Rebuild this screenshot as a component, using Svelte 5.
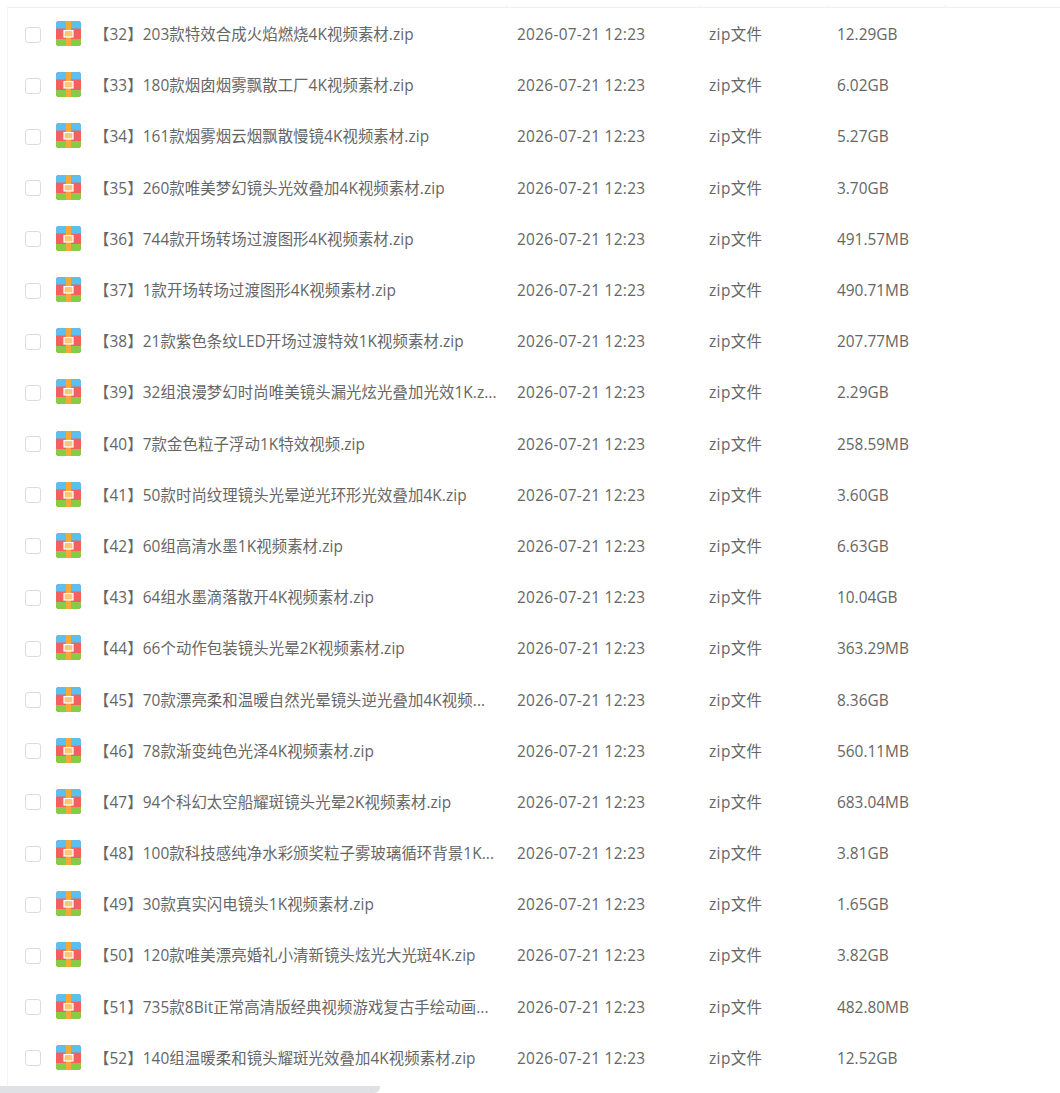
<script>
  const files = [
    ["【32】203款特效合成火焰燃烧4K视频素材.zip", "12.29GB"],
    ["【33】180款烟囱烟雾飘散工厂4K视频素材.zip", "6.02GB"],
    ["【34】161款烟雾烟云烟飘散慢镜4K视频素材.zip", "5.27GB"],
    ["【35】260款唯美梦幻镜头光效叠加4K视频素材.zip", "3.70GB"],
    ["【36】744款开场转场过渡图形4K视频素材.zip", "491.57MB"],
    ["【37】1款开场转场过渡图形4K视频素材.zip", "490.71MB"],
    ["【38】21款紫色条纹LED开场过渡特效1K视频素材.zip", "207.77MB"],
    ["【39】32组浪漫梦幻时尚唯美镜头漏光炫光叠加光效1K.z...", "2.29GB"],
    ["【40】7款金色粒子浮动1K特效视频.zip", "258.59MB"],
    ["【41】50款时尚纹理镜头光晕逆光环形光效叠加4K.zip", "3.60GB"],
    ["【42】60组高清水墨1K视频素材.zip", "6.63GB"],
    ["【43】64组水墨滴落散开4K视频素材.zip", "10.04GB"],
    ["【44】66个动作包装镜头光晕2K视频素材.zip", "363.29MB"],
    ["【45】70款漂亮柔和温暖自然光晕镜头逆光叠加4K视频...", "8.36GB"],
    ["【46】78款渐变纯色光泽4K视频素材.zip", "560.11MB"],
    ["【47】94个科幻太空船耀斑镜头光晕2K视频素材.zip", "683.04MB"],
    ["【48】100款科技感纯净水彩颁奖粒子雾玻璃循环背景1K...", "3.81GB"],
    ["【49】30款真实闪电镜头1K视频素材.zip", "1.65GB"],
    ["【50】120款唯美漂亮婚礼小清新镜头炫光大光斑4K.zip", "3.82GB"],
    ["【51】735款8Bit正常高清版经典视频游戏复古手绘动画...", "482.80MB"],
    ["【52】140组温暖柔和镜头耀斑光效叠加4K视频素材.zip", "12.52GB"],
  ];
</script>

<div class="page">
  <div class="table">
    <div class="head">
      <span class="c-name"></span>
      <span class="c-date"></span>
      <span class="c-type"></span>
      <span class="c-size"></span>
    </div>
    {#each files as file}
      <div class="row">
        <span class="check"></span>
        <svg class="icon" viewBox="0 0 25 25" width="25" height="25">
          <rect width="25" height="25" rx="3" fill="#f45f5f" />
          <path d="M0 7.500V3a3 3 0 0 1 3-3h19a3 3 0 0 1 3 3v4.500z" fill="#5ac0f2" />
          <path d="M0 18v4a3 3 0 0 0 3 3h19a3 3 0 0 0 3-3v-4z" fill="#86cc44" />
          <rect x="10" width="5" height="25" fill="#f7a936" />
          <rect x="8" y="9.500" width="9" height="6.500" fill="#fbc57c" stroke="#fff" stroke-width="1.2" />
        </svg>
        <span class="name">{file[0]}</span>
        <span class="date">2026-07-21 12:23</span>
        <span class="type">zip文件</span>
        <span class="size">{file[1]}</span>
      </div>
    {/each}
  </div>
  <div class="scrollbar"></div>
</div>

<style>
  :global(body) {
    margin: 0;
    background: #fff;
    overflow: hidden;
  }

  .page {
    height: 1093px;
    display: flex;
    flex-direction: column;
    overflow: hidden;
    font-family: "Open Sans", "Noto Sans CJK SC", sans-serif;
    font-size: 15.4px;
    color: #666;
  }

  .table {
    flex: 1;
    margin: 7px 0 0 7px;
    border-top: 1px solid #f0f0f0;
    border-left: 1px solid #f4f4f4;
  }

  .head {
    display: flex;
    height: 0;
    padding-left: 498px;
  }

  .head span {
    height: 3px;
    margin-top: -3px;
    border-left: 1px solid #f0f0f0;
  }

  .c-name { width: 193px; }
  .c-date { width: 127px; }
  .c-type { width: 116px; }

  .row {
    display: flex;
    align-items: center;
    height: 51.2px;
    padding-left: 17px;
    white-space: nowrap;
  }

  .check {
    flex: none;
    width: 14px;
    height: 14px;
    margin: 2px 15px 0 0;
    border: 1px solid #dcdcdc;
    border-radius: 3px;
  }

  .icon {
    flex: none;
    margin-right: 13px;
  }

  .name {
    flex: none;
    width: 423px;
    letter-spacing: 0.08px;
  }

  .date {
    flex: none;
    width: 192px;
    padding-top: 2px;
    letter-spacing: 0.3px;
  }

  .type {
    flex: none;
    width: 128px;
    letter-spacing: 0.4px;
  }

  .size {
    padding-top: 2px;
  }

  .scrollbar {
    flex: none;
    width: 380px;
    height: 7px;
    background: #dfe1e5;
    border-radius: 0 0 6px 0;
  }
</style>
